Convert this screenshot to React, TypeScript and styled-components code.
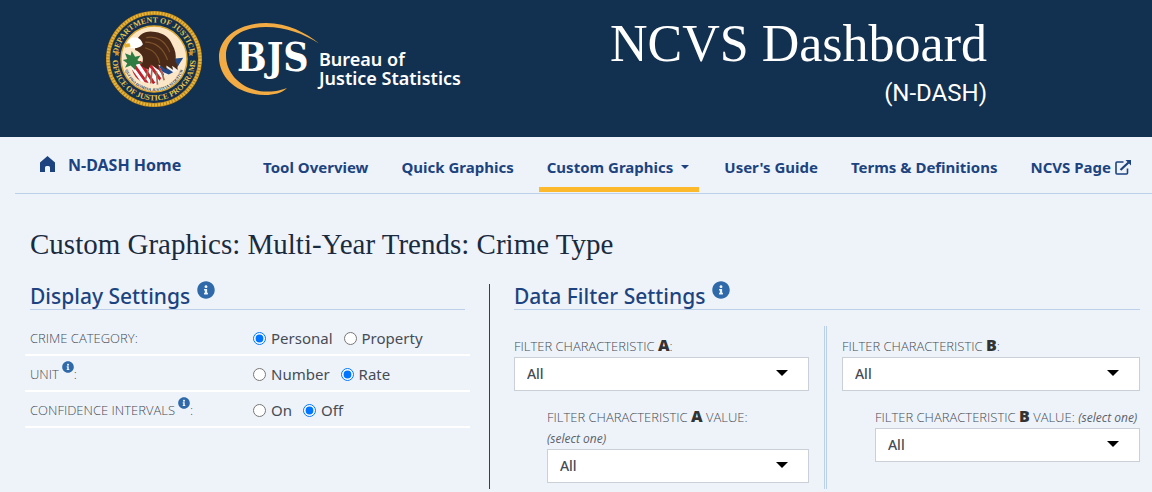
import React, { useId, useState } from "react";
import styled, { createGlobalStyle } from "styled-components";
import { FaInfoCircle } from "react-icons/fa";

const sans = `"Open Sans", "Noto Sans", sans-serif`;
const serif = `"Liberation Serif", "Times New Roman", serif`;

const GlobalStyle = createGlobalStyle`
  * { box-sizing: border-box; }
  body { margin: 0; background: #eef3fa; color: #464c55; font-family: "Noto Sans", "Open Sans", sans-serif; font-size: 15px; }
`;

const Header = styled.header`
  display: flex;
  justify-content: space-between;
  background: #12304f;
  padding: 10px 165px 29px 105px;
`;
const Logos = styled.div`
  display: flex;
  gap: 14px;
`;
const Titles = styled.div`
  text-align: right;
  color: #fff;
  padding-top: 5px;
`;
const SiteTitle = styled.h1`
  margin: 0;
  font: 400 52px/58px ${serif};
`;
const SiteSub = styled.p`
  margin: 5px 0 0;
  font: 400 24px/30px Roboto, sans-serif;
`;

const Nav = styled.nav`
  display: flex;
  justify-content: space-between;
  margin-left: 15px;
  padding: 0 13px 0 25px;
  height: 57px;
  border-bottom: 1px solid #bdd0ea;
`;
const NavLink = styled.a<{ $active?: boolean }>`
  display: flex;
  align-items: center;
  gap: 4px;
  padding: 10px 8px 0;
  margin-bottom: 1px;
  border-bottom: 5px solid ${(p) => (p.$active ? "#fdb92c" : "transparent")};
  color: #1c437f;
  font: 700 15px/20px "Noto Sans", sans-serif;
  text-decoration: none;
  white-space: nowrap;
`;
const HomeLink = styled(NavLink)`
  gap: 13px;
  padding: 6px 0 0;
  font-size: 16px;
`;
const NavList = styled.div`
  display: flex;
  gap: 17px;
`;

const Main = styled.main`
  margin-left: 17px;
`;
const PageTitle = styled.h2`
  margin: 0;
  padding: 34px 13px 24px;
  color: #1b2b3f;
  font: 400 29px/32px ${serif};
`;
const Columns = styled.div`
  display: grid;
  grid-template-columns: 5fr 7fr;
`;
const DisplayPanel = styled.section`
  border-right: 1px solid #1c437f;
  padding: 0 19px 0 8px;
  min-height: 205px;
`;
const FilterPanel = styled.section`
  padding: 0 12px 0 24px;
`;
const PanelTitle = styled.h3<{ $inset?: boolean }>`
  display: flex;
  gap: 4px;
  height: 26px;
  margin: 0 ${(p) => (p.$inset ? "5px" : "0")};
  border-bottom: 1px solid #bdd0ea;
  color: #1c437f;
  font: 500 21px/25px "Noto Sans", sans-serif;
`;
const InfoButton = styled.button<{ $size: number }>`
  display: inline-flex;
  align-self: flex-start;
  padding: 0;
  border: 0;
  background: none;
  color: #2f69a9;
  font-size: ${(p) => p.$size}px;
  margin: -3px 0 0 3px;
`;

const Rows = styled.div`
  padding-top: 10px;
`;
const Row = styled.fieldset`
  display: flex;
  align-items: center;
  height: 36px;
  margin: 0;
  padding: 2px 5px 0;
  border: 0;
  border-bottom: 2px solid #fff;
`;
const RowLabel = styled.div`
  display: flex;
  align-items: center;
  width: 223px;
  font: 300 13px/20px ${sans};
`;
const Choices = styled.div`
  display: flex;
  gap: 11px;
`;
const Choice = styled.label`
  display: flex;
  align-items: center;
  gap: 5px;
  font-size: 15px;
  line-height: 20px;
`;
const Radio = styled.input`
  width: 13px;
  height: 13px;
  margin: 0;
`;

const Filters = styled.div`
  display: grid;
  grid-template-columns: 1fr 1fr;
  margin-top: 16px;
`;
const FilterColumn = styled.div<{ $divided?: boolean }>`
  min-height: 163px;
  padding: ${(p) => (p.$divided ? "9px 15px 0 0" : "9px 0 0 15px")};
  border-right: ${(p) => (p.$divided ? "3px double #bdd0ea" : "0")};
`;
const Field = styled.div<{ $nested?: boolean }>`
  margin: ${(p) => (p.$nested ? "15px 0 0 33px" : "0")};
`;
const FieldLabel = styled.label`
  display: block;
  font: 300 13px/21px ${sans};
`;
const Letter = styled.b`
  color: #333;
  font: 800 16px/20px ${sans};
`;
const Hint = styled.em`
  display: inline-block;
  color: #5b616b;
  font: italic 400 12px/21px ${sans};
`;
const SelectBox = styled.div`
  display: grid;
  align-items: center;
`;
const Select = styled.select`
  grid-area: 1 / 1;
  appearance: none;
  width: 100%;
  height: 34px;
  padding: 0 12px;
  border: 1px solid #cbd0d8;
  border-radius: 0;
  background: #fff;
  color: #444b54;
  font: 500 14px/20px "Noto Sans", sans-serif;
`;
const Arrow = styled.svg`
  grid-area: 1 / 1;
  justify-self: end;
  margin: 0 21px 2px 0;
  pointer-events: none;
`;

function Seal() {
  return (
    <svg width="98" height="98" viewBox="0 0 98 98" role="img" aria-label="Department of Justice, Office of Justice Programs">
      <defs>
        <path id="ringTop" d="M12.500 49a36.500 36.500 0 0 1 73 0" />
        <path id="ringBottom" d="M7.500 49a41.500 41.500 0 0 0 83 0" />
        <path id="motto" d="M19 45a30.500 30.500 0 1 0 60 0" />
        <clipPath id="shield"><path d="M31 55c0-4 3-5 8-4l16 4 5 8-7 9-14-3c-5-3-8-8-8-14z" /></clipPath>
      </defs>
      <circle cx="49" cy="49" r="46" fill="#12304f" stroke="#b98019" strokeWidth="4" />
      <circle cx="49" cy="49" r="46" fill="none" stroke="#e5b63c" strokeWidth="3" strokeDasharray="2 1" />
      <circle cx="49" cy="49" r="33" fill="#fbe7c8" stroke="#d9a42f" strokeWidth="1.500" />
      <g fill="#e9c04a" fontFamily="Liberation Serif, serif" fontWeight="700" fontSize="8">
        <text textAnchor="middle"><textPath href="#ringTop" startOffset="50%">DEPARTMENT OF JUSTICE</textPath></text>
        <text textAnchor="middle"><textPath href="#ringBottom" startOffset="50%">OFFICE OF JUSTICE PROGRAMS</textPath></text>
      </g>
      <g transform="translate(-8 -6) scale(1.12)">
        <path d="M50 56l27-9-6 13-11 4z" fill="#f5f1ea" />
        <path d="M56 50l21-2-5 8-9-1z" fill="#224a86" />
        <path d="M50 57l14 6 4-2-9-6z" fill="#224a86" />
        <g clipPath="url(#shield)">
          <path d="M30 48h34v26H30z" fill="#fff" />
          <path d="M28 56l10 14M32 53l13 18M38 51l13 20M44 50l13 18M50 50l12 16" stroke="#c3222d" strokeWidth="2.600" />
        </g>
        <path d="M25 44l5 2 1-4 3 5 5-1-3 4 4 3-5 1-1 5-4-4-5 2 2-4-4-3 4-1z" fill="#2f7c43" />
        <path d="M34 36c2-9 10-13 18-11 7 1 13 5 15 11 3 5 4 10 3 15 2 3 2 6 2 8l-5-4 1 4-6-4v4l-7-5v5l-7-5-2 5-7-4c4-6 2-11-5-14z" fill="#4a2a17" />
        <path d="M44 30c9-2 17 3 21 13M43 34c9 0 16 5 20 16M43 39c7 2 12 7 13 14" fill="none" stroke="#7f532c" strokeWidth="1" />
        <path d="M28 36c-1-4 2-6 5-6 4-1 7 2 8 6-3 4-8 4-11 3z" fill="#fff" />
        <path d="M29 35l-5 1 1 3 5-1z" fill="#e5ad2c" />
        <path d="M46 58l-3 10M49 59l-1 12M53 60l1 12M57 59l3 9" stroke="#9b7059" strokeWidth="1.500" />
      </g>
      <text fill="#2b3a55" fontFamily="Liberation Serif, serif" fontWeight="700" fontSize="4" textAnchor="middle">
        <textPath href="#motto" startOffset="50%">QUI PRO DOMINA JUSTITIA SEQUITUR</textPath>
      </text>
      <path d="M12 40l1 2 2 .3-1.500 1.500.3 2.200-1.800-1-1.800 1 .3-2.200-1.500-1.500 2-.3zM86 40l1 2 2 .3-1.500 1.500.3 2.200-1.800-1-1.800 1 .3-2.200-1.500-1.500 2-.3z" fill="#d7902e" />
    </svg>
  );
}

function BjsLogo() {
  return (
    <svg width="248" height="98" viewBox="217 10 248 98" role="img" aria-label="BJS Bureau of Justice Statistics">
      <path d="M319 43.500C306 33 288 23 266 23c-28 0-47 15-47 34 0 22 20 38 46 38 9 0 17-2 22-7-8 3-14 3.500-20 3.500-22 0-41-15.500-41-36C226 38 242 27 266 27c20 0 38 7 53 16.500z" fill="#f2ac43" />
      <text x="237" y="71" fill="#fff" fontFamily="DejaVu Serif Condensed, DejaVu Serif, serif" fontWeight="700" fontSize="39">BJS</text>
      <g fill="#fff" fontFamily="Noto Sans, sans-serif" fontWeight="600" fontSize="18">
        <text x="319" y="66">Bureau of</text>
        <text x="319" y="85">Justice Statistics</text>
      </g>
    </svg>
  );
}

function Info({ size, about }: { size: number; about: string }) {
  return (
    <InfoButton type="button" $size={size} aria-label={`About ${about}`}>
      <FaInfoCircle />
    </InfoButton>
  );
}

function Setting({ label, info, options, initial }: { label: string; info?: boolean; options: string[]; initial: string }) {
  const [value, setValue] = useState(initial);
  return (
    <Row aria-label={label}>
      <RowLabel>
        <span>{label}{!info && ":"}</span>
        {info && <><Info size={12} about={label} /><span>:</span></>}
      </RowLabel>
      <Choices>
        {options.map((o) => (
          <Choice key={o}>
            <Radio type="radio" name={label} checked={value === o} onChange={() => setValue(o)} />
            {o}
          </Choice>
        ))}
      </Choices>
    </Row>
  );
}

function Filter({ letter, nested }: { letter: string; nested?: boolean }) {
  const id = useId();
  return (
    <Field $nested={nested}>
      <FieldLabel htmlFor={id}>
        FILTER CHARACTERISTIC <Letter>{letter}</Letter>
        {nested ? <> VALUE: <Hint>(select one)</Hint></> : ":"}
      </FieldLabel>
      <SelectBox>
        <Select id={id}><option>All</option></Select>
        <Arrow width="12" height="6" viewBox="0 0 12 6"><path d="M0 0h12L6 6z" /></Arrow>
      </SelectBox>
    </Field>
  );
}

export default function App() {
  return (
    <>
      <GlobalStyle />
      <Header>
        <Logos><Seal /><BjsLogo /></Logos>
        <Titles>
          <SiteTitle>NCVS Dashboard</SiteTitle>
          <SiteSub>(N-DASH)</SiteSub>
        </Titles>
      </Header>
      <Nav>
        <HomeLink href="#home">
          <svg width="15" height="18" viewBox="0 0 15 18" fill="#1c437f"><path d="M7.500 0L15 6.500V16h-5v-4.500q0-1.500-1.500-1.500h-2Q5 10 5 11.500V16H0V6.500z" /></svg>
          N-DASH Home
        </HomeLink>
        <NavList>
          <NavLink href="#overview">Tool Overview</NavLink>
          <NavLink href="#quick">Quick Graphics</NavLink>
          <NavLink href="#custom" $active>
            Custom Graphics
            <svg width="14" height="4" viewBox="0 0 14 4" fill="#1c437f"><path d="M4 0h8L8 4z" /></svg>
          </NavLink>
          <NavLink href="#guide">User's Guide</NavLink>
          <NavLink href="#terms">Terms &amp; Definitions</NavLink>
          <NavLink href="#ncvs">
            NCVS Page
            <svg width="16" height="15" viewBox="0 0 16 15" fill="none" stroke="#1c437f" strokeWidth="1.600">
              <path d="M8.500 2H2Q1 2 1 3V13Q1 14 2 14H11.500Q12.500 14 12.500 13V8.500" />
              <path d="M5.500 10L13.500 2.500" strokeWidth="2.200" />
              <path d="M10.500 0H16v5.500z" fill="#1c437f" stroke="none" />
            </svg>
          </NavLink>
        </NavList>
      </Nav>
      <Main>
        <PageTitle>Custom Graphics: Multi-Year Trends: Crime Type</PageTitle>
        <Columns>
          <DisplayPanel>
            <PanelTitle $inset>Display Settings <Info size={18} about="display settings" /></PanelTitle>
            <Rows>
              <Setting label="CRIME CATEGORY" options={["Personal", "Property"]} initial="Personal" />
              <Setting label="UNIT" info options={["Number", "Rate"]} initial="Rate" />
              <Setting label="CONFIDENCE INTERVALS" info options={["On", "Off"]} initial="Off" />
            </Rows>
          </DisplayPanel>
          <FilterPanel>
            <PanelTitle>Data Filter Settings <Info size={18} about="data filter settings" /></PanelTitle>
            <Filters>
              <FilterColumn $divided>
                <Filter letter="A" />
                <Filter letter="A" nested />
              </FilterColumn>
              <FilterColumn>
                <Filter letter="B" />
                <Filter letter="B" nested />
              </FilterColumn>
            </Filters>
          </FilterPanel>
        </Columns>
      </Main>
    </>
  );
}
